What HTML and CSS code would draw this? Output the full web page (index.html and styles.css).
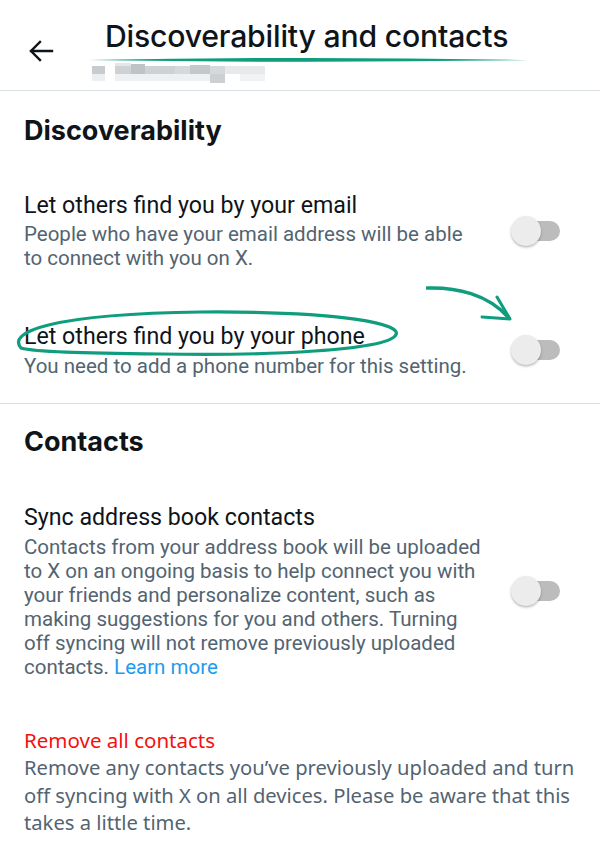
FILE: index.html
```html
<!DOCTYPE html>
<html lang="en">
<head>
<meta charset="utf-8">
<title>Discoverability and contacts</title>
<link rel="stylesheet" href="styles.css">
</head>
<body>
<div class="page">
  <header class="topbar">
    <button class="back" aria-label="Back">
      <svg width="26" height="22" viewBox="0 0 26 22"><path d="M24 11H3M12 2L3 11l9 9" fill="none" stroke="#0f1419" stroke-width="2.4" stroke-linecap="square"/></svg>
    </button>
    <div class="titles">
      <h1 class="title">Discoverability and contacts</h1>
      <svg class="handle" width="185" height="22" viewBox="0 0 185 22">
        <rect x="2" y="5" width="13" height="8" fill="#c9ccce"/>
        <rect x="2" y="13" width="13" height="7" fill="#eceeef"/>
        <rect x="25" y="2" width="16" height="10" fill="#e4e6e8"/>
        <rect x="25" y="5" width="60" height="8" fill="#cfd2d4"/>
        <rect x="41" y="3" width="14" height="10" fill="#bfc3c6"/>
        <rect x="85" y="5" width="50" height="8" fill="#d6d9db"/>
        <rect x="100" y="4" width="20" height="9" fill="#c4c8cb"/>
        <rect x="25" y="13" width="110" height="7" fill="#eef0f1"/>
        <rect x="120" y="13" width="15" height="9" fill="#cdd0d2"/>
        <rect x="135" y="5" width="40" height="8" fill="#e7e9ea"/>
        <rect x="150" y="13" width="25" height="7" fill="#f1f2f3"/>
      </svg>
    </div>
    <svg class="underline" width="440" height="8" viewBox="0 0 440 8"><path d="M0 4 Q220 0 440 4 Q220 7.5 0 4Z" fill="#0f9d7e"/></svg>
  </header>

  <section class="section">
    <h2 class="heading">Discoverability</h2>
    <div class="row">
      <div class="text">
        <div class="label">Let others find you by your email</div>
        <div class="desc">People who have your email address will be able<br>to connect with you on X.</div>
      </div>
      <div class="toggle"><span class="thumb"></span></div>
    </div>
    <div class="row row-phone">
      <div class="text">
        <div class="label">Let others find you by your phone</div>
        <div class="desc">You need to add a phone number for this setting.</div>
      </div>
      <div class="toggle"><span class="thumb"></span></div>
      <svg class="ring" width="390" height="56" viewBox="0 0 390 56"><path d="M10 40 C-4 24 40 6 190 4 C330 3 396 16 384 28 C372 42 260 48 150 46 C70 45 24 44 10 40Z" fill="none" stroke="#0f9d7e" stroke-width="3.2"/></svg>
      <svg class="arrow" width="90" height="42" viewBox="0 0 90 42"><path d="M1 4 C30 3 62 10 83 34" fill="none" stroke="#0f9d7e" stroke-width="3.5" stroke-linecap="round"/><path d="M84 35 L71 13 M84 35 L56 33" fill="none" stroke="#0f9d7e" stroke-width="3" stroke-linecap="round"/></svg>
    </div>
  </section>

  <section class="section section-contacts">
    <h2 class="heading">Contacts</h2>
    <div class="row row-sync">
      <div class="text">
        <div class="label">Sync address book contacts</div>
        <div class="desc">Contacts from your address book will be uploaded<br>to X on an ongoing basis to help connect you with<br>your friends and personalize content, such as<br>making suggestions for you and others. Turning<br>off syncing will not remove previously uploaded<br>contacts. <a class="link" href="#">Learn more</a></div>
      </div>
      <div class="toggle"><span class="thumb"></span></div>
    </div>
    <div class="remove">
      <div class="remove-title">Remove all contacts</div>
      <div class="remove-desc">Remove any contacts you’ve previously uploaded and turn off syncing with X on all devices. Please be aware that this takes a little time.</div>
    </div>
  </section>
</div>
</body>
</html>
```
FILE: styles.css
```css
* { box-sizing: border-box; }
html, body { margin: 0; padding: 0; background: #fff; }
body { font-family: Roboto, "Liberation Sans", sans-serif; color: #0f1419; }
.page { width: 600px; }

.topbar {
  position: relative;
  height: 91px;
  border-bottom: 1px solid #d8e0e4;
  display: flex;
  align-items: flex-start;
}
.back {
  border: 0; background: none; padding: 0;
  margin: 40px 0 0 28px;
  width: 26px; height: 22px;
  display: flex;
}
.titles { margin-left: 36px; display: flex; flex-direction: column; }
.title {
  margin: 18px 0 0 15px;
  font-family: Inter, "Noto Sans", sans-serif;
  font-weight: 500;
  font-size: 30.2px;
  line-height: 37px;
  letter-spacing: -0.2px;
  white-space: nowrap;
  color: #0f1419;
}
.handle { margin-top: 6px; }
.underline { position: absolute; left: 88px; top: 56px; }

.section { padding: 25px 40px 25px 24px; }
.section + .section { border-top: 1px solid #d8e0e4; padding-top: 23px; }
.heading {
  margin: 0;
  font-family: Inter, "Noto Sans", sans-serif;
  font-weight: 700;
  font-size: 27px;
  line-height: 30px;
  color: #0f1419;
}
.row {
  position: relative;
  display: flex;
  align-items: center;
  justify-content: space-between;
  margin-top: 45px;
}
.row-phone { margin-top: 52px; }
.text { flex: 1; white-space: nowrap; }
.label { font-size: 23.2px; line-height: 28px; color: #0f1419; }
.desc { margin-top: 3px; font-size: 20.5px; line-height: 24px; color: #536471; }
.row-phone .desc { margin-top: 4px; }
.link { color: #1d9bf0; text-decoration: none; }

.toggle {
  position: relative;
  width: 47px; height: 20px;
  border-radius: 10px;
  background: #bcbcbc;
  flex: none;
}
.thumb {
  position: absolute;
  left: -2px; top: -5px;
  width: 30px; height: 30px;
  border-radius: 50%;
  background: #ececec;
  box-shadow: 0 1.5px 2.5px rgba(0,0,0,0.28);
}

.ring { position: absolute; left: -13px; top: -14px; }
.arrow { position: absolute; left: 402px; top: -38px; }

.row-sync { margin-top: 46px; }
.row-sync .desc { margin-top: 4px; }
.remove { margin-top: 48px; margin-right: -16px; }
.remove-title {
  font-family: "Noto Sans", sans-serif;
  font-size: 20.5px; line-height: 26px; color: #f50f0f;
}
.remove-desc {
  margin-top: 1px;
  font-family: "Noto Sans", sans-serif;
  font-size: 20.2px; line-height: 27.5px; color: #536471;
}
```
